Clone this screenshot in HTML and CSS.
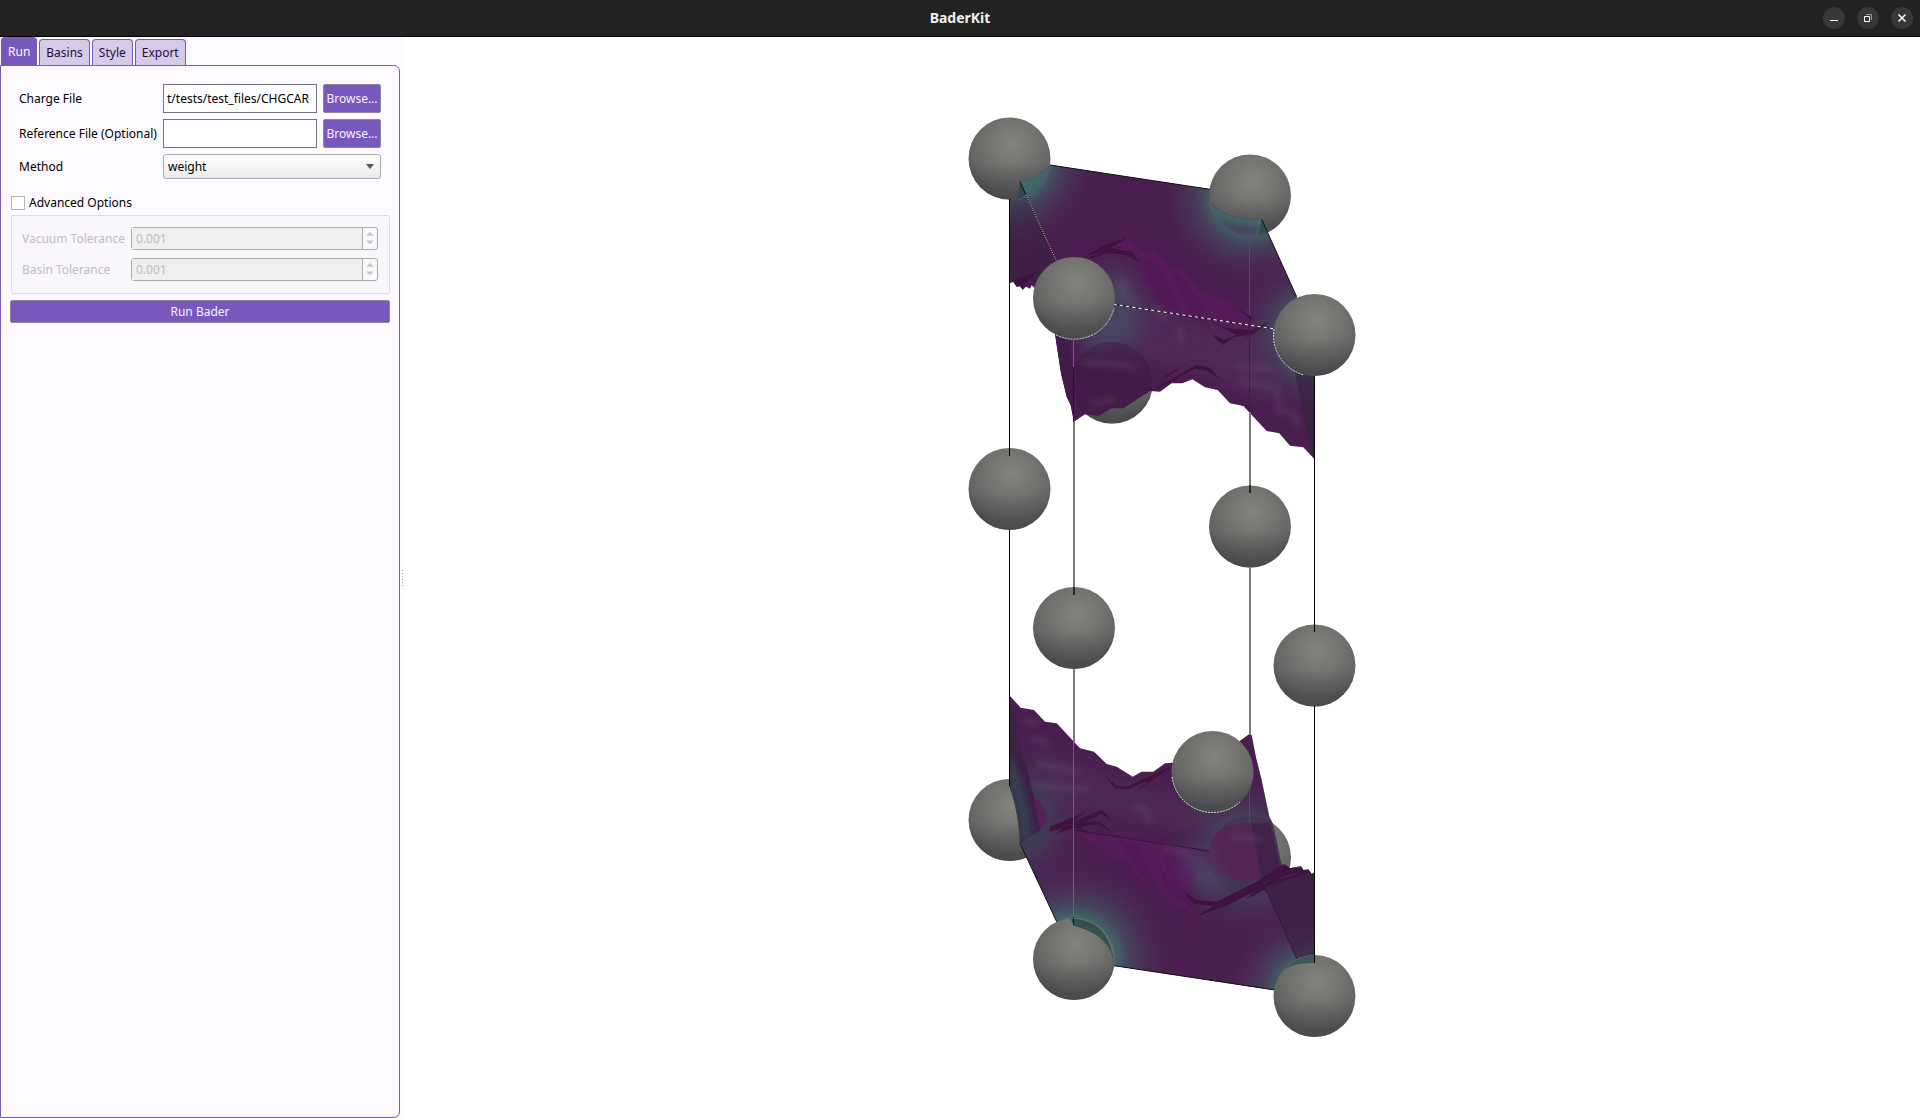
FILE: index.html
```html
<!DOCTYPE html>
<html lang="en">
<head>
<meta charset="utf-8">
<title>BaderKit</title>
<link rel="stylesheet" href="styles.css">
</head>
<body>
<header class="titlebar">
  <h1 class="title">BaderKit</h1>
  <div class="window-buttons">
    <button class="winbtn" type="button" aria-label="Minimize"><svg viewBox="0 0 22 22"><path d="M7 13.5h8" stroke="#fff"/></svg></button>
    <button class="winbtn" type="button" aria-label="Restore"><svg viewBox="0 0 22 22"><path d="M7.500 9.500h5v5h-5z" stroke="#fff"/><path d="M9 7.500h5.500V13" stroke="#999"/></svg></button>
    <button class="winbtn" type="button" aria-label="Close"><svg viewBox="0 0 22 22"><path d="M7.500 7.500l7 7m0-7l-7 7" stroke="#fff" stroke-width="1.500"/></svg></button>
  </div>
</header>
<main class="workspace">
  <section class="sidebar">
    <nav class="tabs" role="tablist">
      <button class="tab active" type="button" role="tab" aria-selected="true">Run</button>
      <button class="tab" type="button" role="tab">Basins</button>
      <button class="tab" type="button" role="tab">Style</button>
      <button class="tab" type="button" role="tab">Export</button>
    </nav>
    <form class="pane">
      <div class="fields">
        <label for="charge">Charge File</label>
        <input class="path" id="charge" type="text" value="t/tests/test_files/CHGCAR">
        <button class="primary" type="button">Browse...</button>
        <label for="reference">Reference File (Optional)</label>
        <input class="path" id="reference" type="text">
        <button class="primary" type="button">Browse...</button>
        <label for="method">Method</label>
        <div class="combo"><select id="method"><option>weight</option></select><svg class="arrow" viewBox="0 0 8 5"><path d="M0 0h8L4 5z"/></svg></div>
      </div>
      <label class="advanced"><input type="checkbox">Advanced Options</label>
      <fieldset class="group" disabled>
        <label for="vacuum">Vacuum Tolerance</label>
        <div class="spin"><input id="vacuum" type="text" value="0.001"><svg class="steps" viewBox="0 0 14 22"><path d="M3 8l4-4 4 4zM3 13h8l-4 4z"/></svg></div>
        <label for="basin">Basin Tolerance</label>
        <div class="spin"><input id="basin" type="text" value="0.001"><svg class="steps" viewBox="0 0 14 22"><path d="M3 8l4-4 4 4zM3 13h8l-4 4z"/></svg></div>
      </fieldset>
      <button class="primary run" type="button">Run Bader</button>
    </form>
  </section>
  <div class="splitter"><i></i><i></i><i></i><i></i><i></i><i></i></div>
  <section class="viewer">
    <svg class="scene" viewBox="404 37 1516 1081" role="img" aria-label="Crystal structure with basin surface">
      <defs>
        <radialGradient id="ball" cx=".53" cy=".32" r=".7"><stop offset="0" stop-color="#84837d"/><stop offset=".4" stop-color="#747471"/><stop offset=".75" stop-color="#636463"/><stop offset="1" stop-color="#484a4b"/></radialGradient>
        <linearGradient id="ballshade" x1="0" y1="0" x2="0" y2="1"><stop offset=".55" stop-color="#454749" stop-opacity="0"/><stop offset=".9" stop-color="#454749" stop-opacity=".6"/></linearGradient>
        <radialGradient id="teal"><stop offset="0" stop-color="#3f706c"/><stop offset=".38" stop-color="#3f6a6a" stop-opacity=".95"/><stop offset=".5" stop-color="#435460" stop-opacity=".7"/><stop offset=".7" stop-color="#473b58" stop-opacity=".4"/><stop offset="1" stop-color="#4a1e50" stop-opacity="0"/></radialGradient>
        <filter id="soft" x="-50%" y="-50%" width="200%" height="200%"><feGaussianBlur stdDeviation="10"/></filter>
        <filter id="haze" x="-50%" y="-50%" width="200%" height="200%"><feGaussianBlur stdDeviation="28"/></filter>
        <g id="atom"><circle r="41" fill="url(#ball)"/><circle r="41" fill="url(#ballshade)"/></g>
        <path id="topmesh" d="M300 195L780 268L780 305Q820 360 935 360L1040 590L1093 704V1077L1060 1042L1020 1037L988 1000L950 993L880 918L840 910L803 870L765 862L727 838L697 850L665 850L630 875L600 873L520 925L485 925L445 948L405 943L372 965L362 915L350 890L333 820L315 703L255 565L245 556L240 566L228 560L218 570L210 558L200 560L190 545L178 548V298H200Q210 280 210 245Q265 235 300 195Z"/>
        <path id="lowmesh" d="M180 48L212 83L252 90L285 125L320 130L390 205L432 215L470 252L500 260L548 290L575 275L610 275L645 250L668 248L800 240L870 182L898 162L905 165L918 232L935 300L958 410L968 430L995 555L1005 553L1020 565L1053 558L1060 570L1075 568L1085 582L1093 577V848L972 930L492 857L371 735L320 725L210 490Q205 390 178 318Z"/>
        <clipPath id="topclip"><use href="#topmesh"/></clipPath>
        <clipPath id="lowclip"><use href="#lowmesh"/></clipPath>
      </defs>

      <use href="#atom" x="1009.500" y="158.500"/><use href="#atom" x="1250" y="195.500"/>
      <use href="#atom" x="1112" y="382.500"/>
      <use href="#atom" x="1009.500" y="820"/><use href="#atom" x="1250" y="857.500"/>
      <use href="#atom" x="1009.500" y="489"/><use href="#atom" x="1250" y="526.500"/>
      <use href="#atom" x="1074" y="628"/><use href="#atom" x="1314.500" y="665.500"/>

      <g transform="translate(950 100) scale(.333333)">
        <use href="#topmesh" fill="#4a1d50"/>
        <g clip-path="url(#topclip)">
          <path d="M178 240H210L330 500L178 580Z" fill="#3f2145"/>
          <path d="M315 703L360 720L372 965L330 850Z" fill="#431b4a"/>
          <circle cx="179" cy="176" r="300" fill="url(#teal)"/>
          <circle cx="900" cy="287" r="300" fill="url(#teal)"/>
          <circle cx="1093" cy="704" r="300" fill="url(#teal)" opacity=".6"/>
          <path d="M178 245L210 245L330 510L178 580Z" fill="#38203f" opacity=".35"/>
          <g filter="url(#haze)">
            <path d="M440 470L520 470L620 600L760 680L1000 700L950 900L700 800L420 780L370 700Z" fill="#4f3159" opacity=".7"/>
            <path d="M480 530L530 540L570 640L560 720L420 760L400 700Z" fill="#454c62" opacity=".8"/>
          </g>
          <circle cx="484" cy="848" r="122" fill="#3b173f" opacity=".4"/>
          <path d="M480 444L535 412L575 452L610 455L660 498L695 510L760 580L820 595L870 635L915 660L900 685L780 660L650 640L600 570L560 480L500 450Z" fill="#571b59"/>
          <path d="M560 465L625 500L690 630L630 610ZM660 500L735 580L775 650L720 642Z" fill="#511a55"/>
          <path d="M405 480L480 444L545 455L573 490L530 466L475 458L425 475ZM400 472L462 436L535 412L475 448ZM785 665L830 685L905 690L960 662L925 692L865 728L900 704L850 712L818 735L785 702L822 720L860 705ZM866 628L908 653L902 660ZM600 873L740 795L780 803L808 836L770 812L735 806L650 852ZM640 830L717 786L650 832ZM178 545L260 515L240 540L215 565Z" fill="#40123f"/>
          <path d="M1035 820L1093 700V1090L1060 940Z" fill="#3b2344"/>
          <circle cx="1093" cy="704" r="240" fill="url(#teal)" opacity=".35"/>
          <g filter="url(#soft)" fill="none" stroke="#685a6c" stroke-width="16" opacity=".35">
            <path d="M490 545L530 550L510 580L560 600M615 620L650 660M690 680L695 730M860 800L970 805M860 840L980 865L990 920M970 930L1030 940L1050 990M390 785L560 800M420 910L500 900"/>
          </g>
          <path d="M205 298A122 122 0 0 0 300 195M780 300A122 122 0 0 0 925 408" fill="none" stroke="#7c6382" stroke-width="2" stroke-dasharray="10 3"/>
          <path d="M790 340Q830 380 925 378V408Q835 410 790 340Z" fill="#4d3358" opacity=".75" filter="url(#soft)"/>
          <path d="M935 358L953 398L925 408Z" fill="#344b50"/><path d="M210 245L228 285L203 298Z" fill="#2d4a4d"/>
        </g>
        <path d="M300 195L780 268M935 358L1040 590" stroke="#111" stroke-width="3"/>
        <path d="M210 245L228 285" stroke="#111" stroke-width="3"/>
        <path d="M228 285L320 484M490 613L975 687" stroke="#211126" stroke-width="3"/>
        <path d="M228 285L320 484" stroke="#ddd" stroke-width="3" stroke-dasharray="3 4"/>
        <path d="M490 613L975 687" stroke="#fff" stroke-width="3" stroke-dasharray="10 9"/>
      </g>

      <g transform="translate(950 680) scale(.333333)">
        <use href="#lowmesh" fill="#4a1e50"/>
        <g clip-path="url(#lowclip)">
          <path d="M240 180L400 260L650 330L900 360L900 480L600 440L300 370Z" fill="#50325a" opacity=".6" filter="url(#haze)"/>
          <circle cx="179" cy="420" r="280" fill="url(#teal)" opacity=".45"/>
          <circle cx="900" cy="530" r="290" fill="url(#teal)" opacity=".45"/>
          <circle cx="371" cy="837" r="330" fill="url(#teal)"/>
          <circle cx="1093" cy="948" r="300" fill="url(#teal)"/>
          <circle cx="179" cy="420" r="122" fill="#3b3b52" opacity=".7"/>
          <circle cx="900" cy="530" r="122" fill="#3d304b" opacity=".6"/>
          <path d="M778 530C778 455 820 430 905 430Q930 500 932 602Q820 605 785 560Z" fill="#542653"/>
          <path d="M905 430L935 600L990 560L960 430Z" fill="#41224a"/>
          <path d="M240 330Q290 380 292 430L270 445Z" fill="#57205a"/>
          <path d="M180 48L215 210L240 300L272 450L212 490Q208 390 178 318Z" fill="#3d2245"/>
          <path d="M178 220V318Q208 390 212 490L245 470Q235 330 178 220Z" fill="#365558" opacity=".6" filter="url(#soft)"/>
          <path d="M370 450L778 513L780 560L700 640L735 712L690 680L660 675L620 625L580 610L530 545L490 540L440 500L405 480Z" fill="#561b59"/>
          <path d="M690 510L778 513L785 580L830 630L760 640Z" fill="#49506a" opacity=".85" filter="url(#haze)"/>
          <path d="M500 475L560 500L620 620L590 610ZM610 510L650 600L720 670L660 650Z" fill="#501a55"/>
          <path d="M700 635L740 660L800 665L920 605L995 555L1093 575L1000 600L885 660L930 625L810 688L830 675L735 712L790 678L730 672ZM300 440L405 397L370 425L455 390L487 422L455 403L400 425L450 425L488 458L445 432L390 440L415 460L375 442L318 462L340 445L298 455ZM362 472L403 497L375 480ZM465 288L500 317L530 320L668 258L555 337L600 300L535 328L495 325Z" fill="#40123f"/>
          <path d="M935 600L1000 580L1093 580V850H1045Z" fill="#3d2245"/>
          <circle cx="1093" cy="948" r="240" fill="url(#teal)" opacity=".5"/>
          <path d="M920 610L1060 565M940 618L1078 575M900 640L1000 585" stroke="#40123f" stroke-width="6"/>
          <path d="M935 600L1045 845" stroke="#321c38" stroke-width="3"/>
          <path d="M370 450L778 513" stroke="#361638" stroke-width="3"/>
          <g filter="url(#soft)" fill="none" stroke="#685a6c" stroke-width="16" opacity=".35">
            <path d="M220 120L270 130M240 175L300 190M260 250L390 275M250 315L420 330M540 385L580 380L600 430M640 500L720 525M840 470L940 480M730 600L760 590"/>
          </g>
        </g>
        <path d="M492 857L975 930M210 490L320 725" stroke="#111" stroke-width="3"/>
      </g>

      <use href="#atom" x="1074" y="298"/><use href="#atom" x="1314.500" y="335"/>
      <use href="#atom" x="1212.500" y="772"/>
      <use href="#atom" x="1074" y="959"/><use href="#atom" x="1314.500" y="996"/>
      <g fill="none" stroke="#ddd" stroke-dasharray="2 1">
        <path d="M1051 332A41 41 0 0 0 1114 308M1274 329A41 41 0 0 0 1304 375M1172 777A41 41 0 0 0 1240 802"/>
      </g>
      <g transform="translate(950 680) scale(.333333)">
        <path d="M362 716Q480 715 493 857Q485 765 371 737Z" fill="#36504f"/>
        <path d="M972 930Q975 848 1093 848V827Q1050 824 1010 860Q975 890 972 930Z" fill="#3a5859"/>
      </g>

      <g fill="none" stroke="#000"><path d="M1009.500 199V456M1009.500 530V786M1314.500 376V632M1314.500 706V963"/></g>
      <g fill="none" stroke="#7a7a7a" stroke-width="2"><path d="M1074 422V587M1074 669V742M1250 412V485M1250 567V735"/></g>
      <g fill="none" stroke="#2d2d2b" stroke-width="2"><path d="M1074 587V595M1250 485V493"/></g>
      <path d="M1249.500 236V315M1249.500 788V822" stroke="#65416a"/>
      <path d="M1249.500 320V412" stroke="#38203f"/>
      <path d="M1073.500 339V367M1073.500 742V917" stroke="#6c646e"/>
      <path d="M1073.500 367V422M1073.500 917V925" stroke="#29142c"/>
    </svg>
  </section>
</main>
</body>
</html>
```
FILE: styles.css
```css
* { box-sizing: border-box; }
body {
  margin: 0;
  height: 100vh;
  display: flex;
  flex-direction: column;
  background: #fff;
  color: #000;
  font: 12px/18px "Noto Sans", sans-serif;
}
button, input, select { font: inherit; color: inherit; margin: 0; }
.titlebar {
  height: 37px;
  flex: none;
  display: grid;
  grid-template-columns: 1fr auto 1fr;
  align-items: center;
  background: #222;
  border-bottom: 1px solid #000;
}
.title {
  grid-column: 2;
  margin: 0;
  color: #f2f2f2;
  font: bold 14px/20px "Noto Sans", sans-serif;
}
.window-buttons { display: flex; justify-content: flex-end; gap: 12px; padding-right: 7px; }
.winbtn { width: 22px; height: 22px; padding: 0; border: 0; border-radius: 50%; background: #373737; }
.winbtn svg { display: block; width: 22px; height: 22px; fill: none; }

.workspace { flex: 1; min-height: 0; display: flex; }
.sidebar { width: 400px; flex: none; display: flex; flex-direction: column; background: #fcfaff; }
.tabs { display: flex; align-items: flex-end; gap: 2px; height: 28px; padding-left: 1px; }
.tab {
  height: 26px;
  padding: 0 6px;
  border: 1px solid #7958bd;
  border-bottom: 0;
  border-radius: 4px 4px 0 0;
  background: #d5caea;
  color: #2a0a3a;
}
.tab.active { height: 28px; background: #7958bd; color: #fcfaff; }
.pane {
  flex: 1;
  padding: 18px 9px;
  border: 1px solid #7958bd;
  border-radius: 0 6px 6px 0;
}
.fields {
  display: grid;
  grid-template-columns: 138px 1fr 58px;
  gap: 6px;
  align-items: center;
  padding: 0 9px;
}
.path { width: 100%; height: 29px; padding: 0 3px; border: 1px solid #77757b; background: #fff; }
.primary {
  height: 29px;
  padding: 0;
  border: 1px solid #8c8799;
  border-radius: 2px;
  background: #7958bd;
  color: #f7f0ff;
}
.combo { grid-column: 2 / 4; position: relative; }
.combo select {
  display: block;
  width: 100%;
  height: 25px;
  padding: 0 4px;
  appearance: none;
  border: 1px solid #aaa;
  border-radius: 3px;
  background: linear-gradient(#fff, #ebebeb);
}
.arrow { position: absolute; right: 7px; top: 10px; width: 8px; height: 5px; fill: #555; }
.advanced { display: flex; align-items: center; gap: 4px; height: 20px; margin-top: 14px; }
.advanced input { appearance: none; width: 14px; height: 14px; margin-left: 1px; border: 1px solid #b4b4b4; background: #fff; }
.group {
  display: grid;
  grid-template-columns: 103px 1fr;
  gap: 8px 6px;
  align-items: center;
  margin: 2px 0 0 1px;
  padding: 11px 11px 12px 10px;
  border: 1px solid #dfdce3;
  border-radius: 2px;
  background: #f9f7fc;
  color: #c0bec2;
}
.spin { display: flex; height: 23px; border: 1px solid #acacac; border-radius: 3px; background: #fafafa; }
.spin input { flex: 1; min-width: 0; padding: 0 4px; border: 0; border-right: 1px solid #acacac; background: #efefef; color: #bebebe; }
.steps { width: 14px; height: 21px; fill: #c6c6c6; }
.primary.run { width: 100%; height: 23px; margin-top: 6px; }

.splitter {
  width: 4px;
  flex: none;
  display: flex;
  flex-direction: column;
  align-items: center;
  justify-content: center;
  gap: 2px;
  background: #fcfaff;
}
.splitter i { width: 1px; height: 1px; background: #aaa; }
.viewer { flex: 1; min-width: 0; background: #fff; }
.scene { display: block; width: 100%; height: 100%; }
```
